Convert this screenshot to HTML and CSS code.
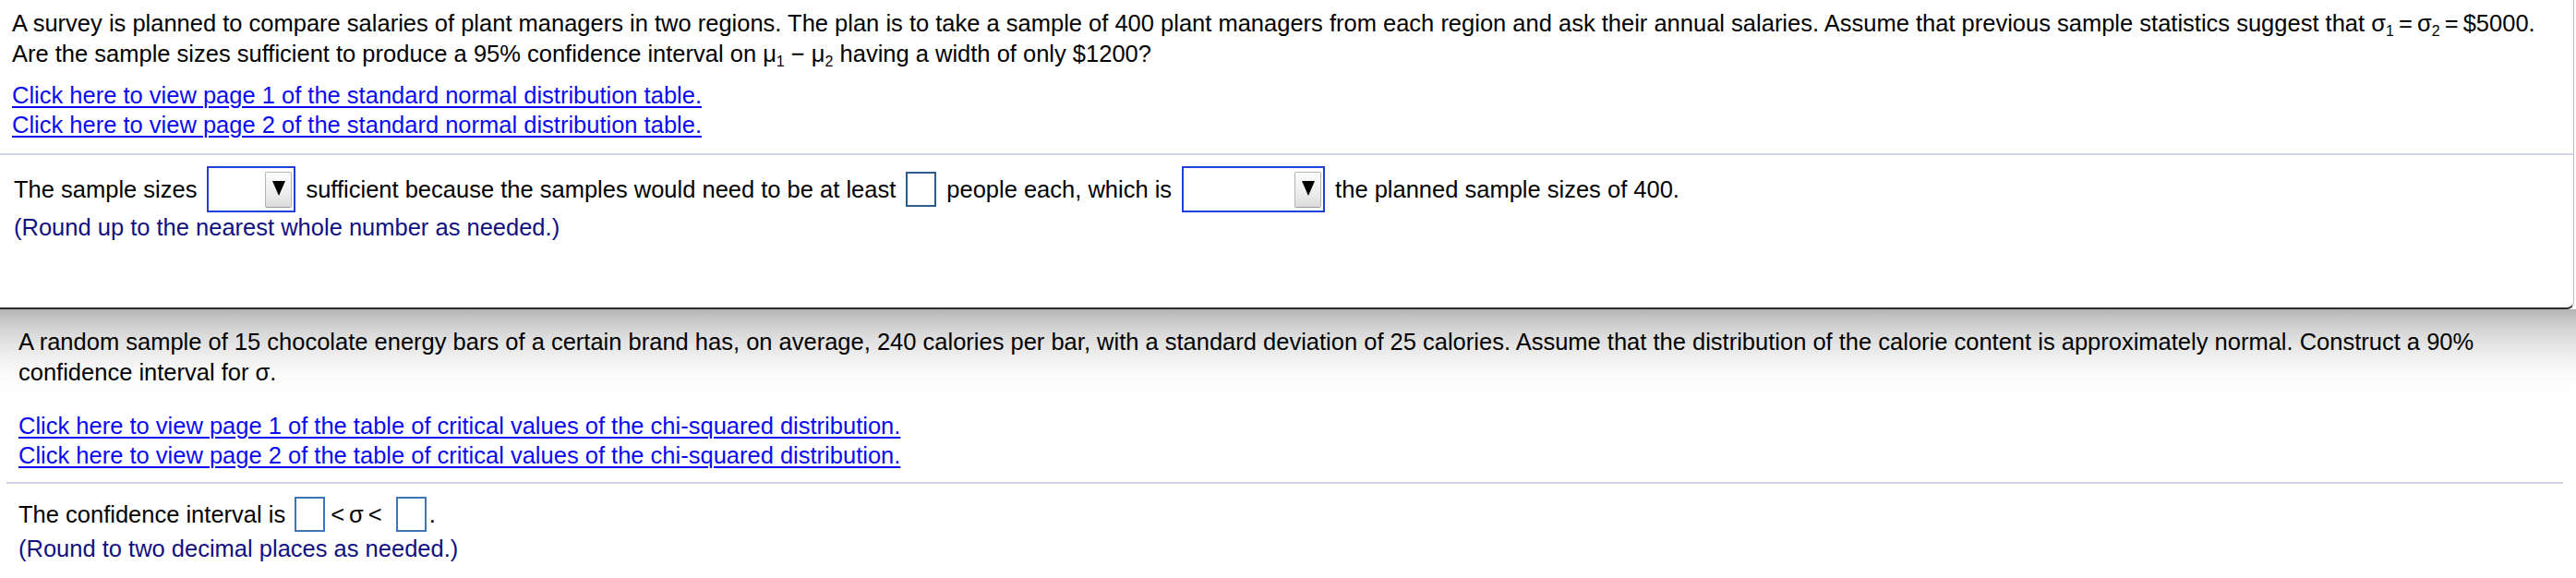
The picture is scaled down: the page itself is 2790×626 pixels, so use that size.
FILE: index.html
```html
<!DOCTYPE html>
<html>
<head>
<meta charset="utf-8">
<title>Questions</title>
<link rel="stylesheet" href="styles.css">
</head>
<body>
<div class="panel">
  <div class="question">
    <p class="stem"><span class="line">A survey is planned to compare salaries of plant managers in two regions. The plan is to take a sample of 400 plant managers from each region and ask their annual salaries. Assume that previous sample statistics suggest that σ<sub>1</sub>&#8201;=&#8201;σ<sub>2</sub>&#8201;=&#8201;$5000.</span><span class="line">Are the sample sizes sufficient to produce a 95% confidence interval on μ<sub>1</sub> − μ<sub>2</sub> having a width of only $1200?</span></p>
    <div class="links">
      <a href="#">Click here to view page 1 of the standard normal distribution table.</a>
      <a href="#">Click here to view page 2 of the standard normal distribution table.</a>
    </div>
  </div>
  <div class="sep"></div>
  <div class="answer">
    <div class="row">
      <span>The sample sizes</span>
      <span class="select sel-short"><span class="btn"><svg width="14" height="16" viewBox="0 0 14 16"><polygon points="0,0 14,0 7,16" fill="#000"/></svg></span></span>
      <span>sufficient because the samples would need to be at least</span>
      <span class="box box-a"></span>
      <span>people each, which is</span>
      <span class="select sel-long"><span class="btn"><svg width="14" height="16" viewBox="0 0 14 16"><polygon points="0,0 14,0 7,16" fill="#000"/></svg></span></span>
      <span>the planned sample sizes of 400.</span>
    </div>
    <p class="hint">(Round up to the nearest whole number as needed.)</p>
  </div>
</div>
<div class="lower">
  <div class="question2">
    <p class="stem"><span class="line">A random sample of 15 chocolate energy bars of a certain brand has, on average, 240 calories per bar, with a standard deviation of 25 calories. Assume that the distribution of the calorie content is approximately normal. Construct a 90%</span><span class="line">confidence interval for σ.</span></p>
    <div class="links links2">
      <a href="#">Click here to view page 1 of the table of critical values of the chi-squared distribution.</a>
      <a href="#">Click here to view page 2 of the table of critical values of the chi-squared distribution.</a>
    </div>
  </div>
  <div class="sep sep2"></div>
  <div class="answer2">
    <div class="row row2">
      <span>The confidence interval is</span>
      <span class="box box-b"></span>
      <span class="rel">&lt;σ&lt;</span>
      <span class="box box-b box-c"></span>
      <span class="dot">.</span>
    </div>
    <p class="hint hint2">(Round to two decimal places as needed.)</p>
  </div>
</div>
</body>
</html>
```

FILE: styles.css
```css
html, body {
  margin: 0;
  padding: 0;
  background: #fff;
}
body {
  font-family: "Liberation Sans", Arial, sans-serif;
  font-size: 25.5px;
  color: #000;
  width: 2790px;
  overflow: hidden;
}
.panel {
  box-sizing: border-box;
  width: 2788px;
  height: 335px;
  background: #fff;
  border-bottom: 2px solid #2e2e32;
  border-right: 1px solid #bdbdbd;
  border-bottom-right-radius: 8px;
  position: relative;
  z-index: 1;
}
.question {
  padding: 9px 12px 0 13px;
}
.stem {
  margin: 0;
  line-height: 32px;
}
.line {
  display: block;
  white-space: nowrap;
}
.line + .line {
  margin-top: 1px;
}
sub {
  font-size: 16px;
  line-height: 0;
  vertical-align: -5px;
}
.links {
  margin-top: 13px;
}
.links a {
  display: block;
  line-height: 32px;
  color: #0a0af0;
  text-decoration: underline;
  text-decoration-thickness: 2px;
  text-underline-offset: 3px;
  width: max-content;
}
.sep {
  margin-top: 15px;
  height: 2px;
  background: #cfd3e4;
}
.answer {
  padding: 0 15px;
}
.row {
  margin-top: 12px;
  display: flex;
  align-items: center;
  gap: 11px;
  height: 50px;
  white-space: nowrap;
}
.select {
  box-sizing: border-box;
  height: 50px;
  border: 2px solid #1f3fd9;
  background: #fff;
  display: flex;
  justify-content: flex-end;
  align-items: center;
  padding-right: 2px;
}
.sel-short { width: 96px; }
.sel-long { width: 155px; }
.btn {
  box-sizing: border-box;
  width: 29px;
  height: 39px;
  border: 1px solid #b4b4b4;
  border-bottom-color: #9a9a9a;
  border-radius: 2px;
  background: linear-gradient(#fcfcfc, #ececec 60%, #dcdcdc);
  display: flex;
  justify-content: center;
  padding-top: 9px;
}
.btn svg { display: block; }
.box {
  box-sizing: border-box;
  display: inline-block;
  width: 33px;
  height: 38px;
  border: 2px solid #2d5c8c;
  background: #fff;
}
.hint {
  margin: 0;
  line-height: 32px;
  color: #101080;
}
.lower {
  padding: 0 14px 0 7px;
  height: 291px;
  background: linear-gradient(to bottom, #b2b2b2 0px, #c9c9c9 12px, #dddddd 30px, #ececec 48px, #f6f6f6 62px, #fcfcfc 76px, #ffffff 90px);
}
.question2 {
  padding: 19px 0 0 13px;
}
.links2 {
  margin-top: 26px;
}
.sep2 {
  margin-top: 13px;
}
.answer2 {
  padding-left: 13px;
}
.row2 {
  margin-top: 14px;
  height: 38px;
  gap: 0;
}
.box-b {
  border-color: #3f74b8;
  margin-left: 10px;
}
.rel {
  margin: 0 0 0 6px;
  letter-spacing: 5px;
}
.dot {
  margin-left: 3px;
}
.hint2 {
  margin-top: 2px;
}
```
